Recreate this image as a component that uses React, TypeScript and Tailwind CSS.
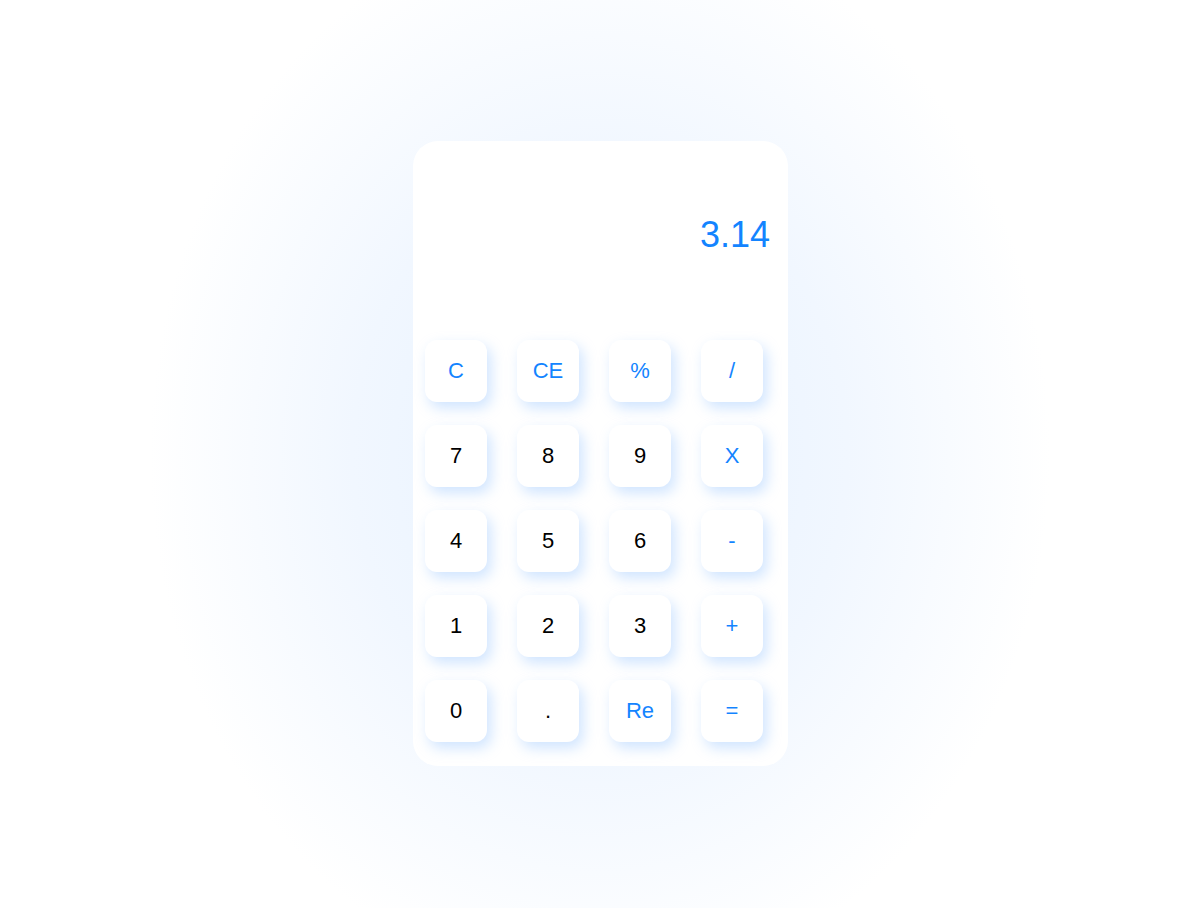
import React from "react";

const keys: { label: string; accent?: boolean }[] = [
  { label: "C", accent: true },
  { label: "CE", accent: true },
  { label: "%", accent: true },
  { label: "/", accent: true },
  { label: "7" },
  { label: "8" },
  { label: "9" },
  { label: "X", accent: true },
  { label: "4" },
  { label: "5" },
  { label: "6" },
  { label: "-", accent: true },
  { label: "1" },
  { label: "2" },
  { label: "3" },
  { label: "+", accent: true },
  { label: "0" },
  { label: "." },
  { label: "Re", accent: true },
  { label: "=", accent: true },
];

export default function App() {
  return (
    <div
      className="w-full h-[908px] flex items-center justify-center pl-[12px] bg-[radial-gradient(ellipse_450px_540px_at_600px_454px,#e5f1ff_0%,#f1f7ff_55%,#ffffff_100%)]"
      style={{ fontFamily: '"Liberation Sans", Arial, sans-serif' }}
    >
      {/* calculator */}
      <div className="w-[375px] h-[625px] -mt-[1px] bg-white rounded-[25px] flex flex-col">
        <div className="h-[187px] flex items-center justify-end pr-[18px]">
          <span className="text-[36px] leading-none text-[#1384ff]">3.14</span>
        </div>
        <div className="grid grid-cols-[62px_62px_62px_62px] gap-x-[30px] gap-y-[23px] pl-[12px] pt-[12px]">
          {keys.map((k) => (
            <button
              key={k.label}
              className={`w-[62px] h-[62px] rounded-[12px] bg-white flex items-center justify-center text-[22px] leading-none shadow-[4px_6px_14px_rgba(186,216,255,0.7)] ${
                k.accent ? "text-[#1384ff]" : "text-black"
              }`}
            >
              {k.label}
            </button>
          ))}
        </div>
      </div>
    </div>
  );
}
